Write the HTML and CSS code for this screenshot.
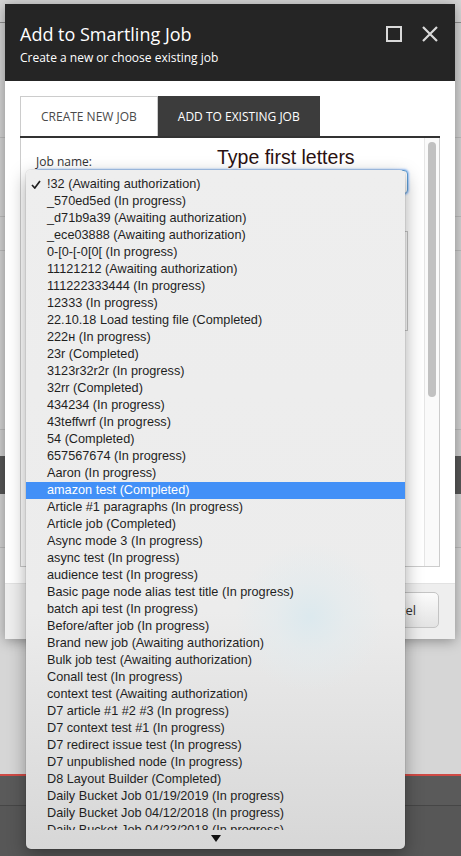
FILE: index.html
```html
<!DOCTYPE html>
<html lang="en">
  <head>
    <meta charset="UTF-8" />
    <meta name="viewport" content="width=device-width, initial-scale=1.0" />
    <title>Add to Smartling Job</title>
    <link rel="stylesheet" href="styles.css">
  </head>
  <body>
    <!-- page behind the modal -->
    <div class="page">
      <div class="page-topbar"></div>
      <div class="page-row row-1"></div>
      <div class="page-row row-2"></div>
      <div class="page-row row-3"></div>
      <div class="page-row row-4"></div>
      <div class="page-row row-5"></div>
      <div class="page-band"></div>
      <div class="page-row row-6"></div>
      <div class="page-row row-7"></div>
      <div class="page-red"></div>
      <div class="page-foot"></div>
      <div class="page-foot-2"></div>
    </div>

    <div class="dialog">
      <div class="dialog-header">
        <div>
          <h1 class="dialog-title">Add to Smartling Job</h1>
          <div class="dialog-subtitle">Create a new or choose existing job</div>
        </div>
        <div class="dialog-icons">
          <svg width="16" height="16" viewBox="0 0 16 16">
            <rect x="1" y="1" width="14" height="14" fill="none" stroke="#d9d9d9" stroke-width="2" />
          </svg>
          <svg width="16" height="16" viewBox="0 0 16 16">
            <path d="M1 1 L15 15 M15 1 L1 15" stroke="#d9d9d9" stroke-width="2.2" fill="none" />
          </svg>
        </div>
      </div>

      <div class="dialog-body">
        <div class="tabs">
          <div class="tab">Create new job</div>
          <div class="tab active">Add to existing job</div>
        </div>
        <div class="tab-panel">
          <div class="panel-content">
            <label class="field-label">Job name:</label>
            <div class="select-box"></div>
            <div class="textarea-box"></div>
          </div>
          <div class="scrollbar">
            <div class="scroll-thumb"></div>
          </div>
        </div>
      </div>

      <div class="dialog-footer">
        <button class="btn">Cancel</button>
      </div>
    </div>

    <div class="hint">Type first letters</div>

    <div class="dropdown">
      <div class="dropdown-list">
        <div class="option">
          <span class="check">
            <svg width="10" height="9" viewBox="0 0 10 9">
              <path d="M1 5 L3.8 8 L9 1" stroke="#1f1f1f" stroke-width="1.7" fill="none" />
            </svg>
          </span>!32 (Awaiting authorization)
        </div>
        <div class="option"><span class="check"></span>_570ed5ed (In progress)</div>
        <div class="option"><span class="check"></span>_d71b9a39 (Awaiting authorization)</div>
        <div class="option"><span class="check"></span>_ece03888 (Awaiting authorization)</div>
        <div class="option"><span class="check"></span>0-[0-[-0[0[ (In progress)</div>
        <div class="option"><span class="check"></span>11121212 (Awaiting authorization)</div>
        <div class="option"><span class="check"></span>111222333444 (In progress)</div>
        <div class="option"><span class="check"></span>12333 (In progress)</div>
        <div class="option"><span class="check"></span>22.10.18 Load testing file (Completed)</div>
        <div class="option"><span class="check"></span>222н (In progress)</div>
        <div class="option"><span class="check"></span>23r (Completed)</div>
        <div class="option"><span class="check"></span>3123r32r2r (In progress)</div>
        <div class="option"><span class="check"></span>32rr (Completed)</div>
        <div class="option"><span class="check"></span>434234 (In progress)</div>
        <div class="option"><span class="check"></span>43teffwrf (In progress)</div>
        <div class="option"><span class="check"></span>54 (Completed)</div>
        <div class="option"><span class="check"></span>657567674 (In progress)</div>
        <div class="option"><span class="check"></span>Aaron (In progress)</div>
        <div class="option selected"><span class="check"></span>amazon test (Completed)</div>
        <div class="option"><span class="check"></span>Article #1 paragraphs (In progress)</div>
        <div class="option"><span class="check"></span>Article job (Completed)</div>
        <div class="option"><span class="check"></span>Async mode 3 (In progress)</div>
        <div class="option"><span class="check"></span>async test (In progress)</div>
        <div class="option"><span class="check"></span>audience test (In progress)</div>
        <div class="option"><span class="check"></span>Basic page node alias test title (In progress)</div>
        <div class="option"><span class="check"></span>batch api test (In progress)</div>
        <div class="option"><span class="check"></span>Before/after job (In progress)</div>
        <div class="option"><span class="check"></span>Brand new job (Awaiting authorization)</div>
        <div class="option"><span class="check"></span>Bulk job test (Awaiting authorization)</div>
        <div class="option"><span class="check"></span>Conall test (In progress)</div>
        <div class="option"><span class="check"></span>context test (Awaiting authorization)</div>
        <div class="option"><span class="check"></span>D7 article #1 #2 #3 (In progress)</div>
        <div class="option"><span class="check"></span>D7 context test #1 (In progress)</div>
        <div class="option"><span class="check"></span>D7 redirect issue test (In progress)</div>
        <div class="option"><span class="check"></span>D7 unpublished node (In progress)</div>
        <div class="option"><span class="check"></span>D8 Layout Builder (Completed)</div>
        <div class="option"><span class="check"></span>Daily Bucket Job 01/19/2019 (In progress)</div>
        <div class="option"><span class="check"></span>Daily Bucket Job 04/12/2018 (In progress)</div>
        <div class="option"><span class="check"></span>Daily Bucket Job 04/23/2018 (In progress)</div>
      </div>
      <div class="dropdown-more">
        <svg width="10" height="7" viewBox="0 0 10 7">
          <polygon points="0,0 10,0 5,7" fill="#111" />
        </svg>
      </div>
    </div>
  </body>
</html>
```

FILE: styles.css
```css
* {
  margin: 0;
  padding: 0;
  box-sizing: border-box;
}
body {
  font-family: "Open Sans", "Liberation Sans", sans-serif;
  background: #575757;
  height: 856px;
  overflow: hidden;
}

/* background page */
.page-topbar {
  height: 23px;
  background: #d6d6d6;
  border-bottom: 1px solid #8e8e8e;
}
.page-row {
  background: #d3d3d3;
  border-bottom: 1px solid #bcbcbc;
}
.row-1 { height: 115px; }
.row-2 { height: 79px; }
.row-3 { height: 34px; }
.row-4 { height: 179px; }
.row-5 { height: 26px; border-bottom: none; background: #cfcfcf; }
.page-band {
  height: 38px;
  background: #575757;
}
.row-6 { height: 54px; }
.row-7 { height: 226px; border-bottom: none; background: #d6d6d6; }
.page-red {
  height: 2px;
  background: #cf4a45;
}
.page-foot {
  height: 30px;
  background: #5a5a5a;
  border-bottom: 1px solid #464646;
}
.page-foot-2 {
  height: 60px;
  background: #575757;
}

/* modal */
.dialog {
  position: absolute;
  top: 4px;
  left: 5px;
  width: 450px;
  background: #fff;
  box-shadow: 0 2px 12px rgba(0, 0, 0, 0.35);
}
.dialog-header {
  display: flex;
  justify-content: space-between;
  align-items: flex-start;
  background: #252525;
  color: #fff;
  padding: 18px 17px 14px 15px;
  height: 77px;
}
.dialog-title {
  font-size: 18px;
  font-weight: 400;
  line-height: 24px;
}
.dialog-subtitle {
  font-size: 12px;
  line-height: 17px;
  margin-top: 3px;
}
.dialog-icons {
  display: flex;
  gap: 20px;
  margin-top: 4px;
}
.dialog-body {
  padding: 15px 15px 16px;
}
.tabs {
  display: flex;
  border-bottom: 2px solid #333;
}
.tab {
  height: 40px;
  display: flex;
  align-items: center;
  padding: 0 20px;
  font-size: 12px;
  text-transform: uppercase;
  color: #4a4a4a;
  border: 1px solid #ccc;
  border-bottom: none;
  background: #fff;
}
.tab.active {
  background: #3c3c3c;
  border-color: #3c3c3c;
  color: #fff;
  padding: 0 19px;
}
.tab-panel {
  display: flex;
  height: 429px;
  border: 1px solid #ccc;
  border-top: none;
}
.panel-content {
  flex: 1;
  padding: 15px 16px 0 15px;
}
.field-label {
  display: block;
  font-size: 12px;
  line-height: 17px;
  color: #333;
}
.select-box {
  height: 24px;
  border: 1px solid #5e9ed6;
  border-radius: 4px;
  box-shadow: 0 0 2px 1px rgba(66, 144, 247, 0.55);
  background: #fff;
}
.textarea-box {
  height: 100px;
  margin-top: 37px;
  border: 1px solid #c8c8c8;
}
.scrollbar {
  width: 15px;
  border-left: 1px solid #e6e6e6;
  background: #fafafa;
  padding: 4px 2px 0 3px;
}
.scroll-thumb {
  width: 8px;
  height: 255px;
  border-radius: 4px;
  background: #c1c1c1;
}
.dialog-footer {
  display: flex;
  justify-content: flex-end;
  background: #eeeeee;
  border-top: 1px solid #e2e2e2;
  padding: 8px 16px 11px;
}
.btn {
  height: 36px;
  padding: 0 22px;
  font-family: "Open Sans", sans-serif;
  font-size: 13px;
  color: #333;
  border: 1px solid #c4c4c4;
  border-radius: 5px;
  background: linear-gradient(#fbfbfb, #e3e3e3);
}

/* annotation over the screenshot */
.hint {
  position: absolute;
  top: 146px;
  left: 217px;
  font-family: "Liberation Sans", Arial, sans-serif;
  font-size: 19.5px;
  line-height: 22px;
  color: #2a1111;
  text-shadow: 0 0 2px #fff, 0 0 3px #fff, 0 1px 4px #fff;
}

/* native select popup */
.dropdown {
  position: absolute;
  top: 170px;
  left: 26px;
  width: 379px;
  height: 679px;
  display: flex;
  flex-direction: column;
  border-radius: 5px;
  overflow: hidden;
  background:
    radial-gradient(circle at 284px 447px, rgba(220, 233, 238, 1) 0, rgba(226, 235, 238, 0.6) 35px, rgba(236, 236, 236, 0) 75px),
    linear-gradient(#eeeeee 0, #ececec 65%, #d7d7d7 100%);
  box-shadow: 0 6px 18px rgba(0, 0, 0, 0.35), 0 0 0 1px rgba(0, 0, 0, 0.06);
}
.dropdown-list {
  flex: 1;
  overflow: hidden;
  padding-top: 6px;
}
.option {
  display: flex;
  align-items: center;
  height: 17px;
  line-height: 17px;
  font-family: "Liberation Sans", Arial, sans-serif;
  font-size: 12.7px;
  color: #1f1f1f;
  white-space: nowrap;
}
.option.selected {
  background: #4290f7;
  color: #fff;
}
.check {
  display: flex;
  align-items: center;
  flex: none;
  width: 21px;
  height: 17px;
  padding-left: 5px;
}
.dropdown-more {
  height: 19px;
  display: flex;
  justify-content: center;
  align-items: center;
  padding-bottom: 2px;
}
```
